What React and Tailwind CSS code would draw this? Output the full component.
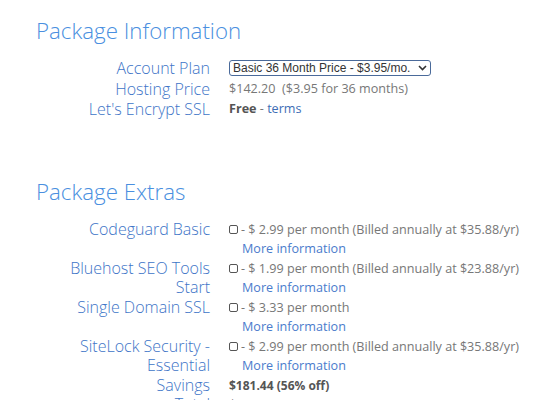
const extras = [
  { name: 'Codeguard Basic', price: '$ 2.99 per month (Billed annually at $35.88/yr)' },
  { name: 'Bluehost SEO Tools Start', price: '$ 1.99 per month (Billed annually at $23.88/yr)' },
  { name: 'Single Domain SSL', price: '$ 3.33 per month' },
  { name: 'SiteLock Security - Essential', price: '$ 2.99 per month (Billed annually at $35.88/yr)' },
];

function Row({ label, tall, children }) {
  const lh = tall ? 'leading-[20.5px]' : 'leading-[19.5px]';
  return (
    <div className="flex">
      <div className={`w-[174px] shrink-0 text-right text-[16px] font-light text-[#3d74c7] pl-[30px] ${lh}`}>
        {label}
      </div>
      <div className={`pl-[19px] text-[12.6px] text-[#777] whitespace-nowrap ${lh}`}>{children}</div>
    </div>
  );
}

export default function App() {
  return (
    <div className="bg-white min-h-[400px] px-[36px] pt-[15px]" style={{ fontFamily: '"Open Sans", sans-serif' }}>
      <h2 className="text-[22.3px] font-light text-[#4a8fe0] leading-[32px]">Package Information</h2>

      <div className="mt-[11px]">
        <Row tall label="Account Plan">
          <div className="relative mt-[2px] w-[202px] h-[16px] border border-[#4a6a9a] rounded-[3px] bg-white flex items-center pl-[3px] text-[12px] leading-[14px] text-[#333] font-['Liberation_Sans',sans-serif]">
            <span>Basic 36 Month Price - $3.95/mo.</span>
            <svg className="absolute right-[3px] top-[4px]" width="9" height="6" viewBox="0 0 9 6" fill="none">
              <path d="M1 1l3.5 3.5L8 1" stroke="#333" strokeWidth="1.6" />
            </svg>
          </div>
        </Row>
        <Row tall label="Hosting Price">$142.20&nbsp; ($3.95 for 36 months)</Row>
        <Row tall label="Let's Encrypt SSL">
          <b className="font-bold text-[#555]">Free</b> - <span className="text-[#3d6db5]">terms</span>
        </Row>
      </div>

      <h2 className="mt-[56px] text-[22.3px] font-light text-[#4a8fe0] leading-[32px]">Package Extras</h2>

      <div className="mt-[12px]">
        {extras.map((e) => (
          <Row key={e.name} label={e.name}>
            <div className="flex items-center">
              <span className="w-[9px] h-[9px] border border-[#555] rounded-[2px] mr-[3px] shrink-0" />
              <span>- {e.price}</span>
            </div>
            <div className="pl-[13px] text-[#4a7bcc]">More information</div>
          </Row>
        ))}
        <Row label="Savings">
          <b className="font-bold text-[#555] text-[12px]">$181.44 (56% off)</b>
        </Row>
        <Row label="Total">$142.20</Row>
      </div>
    </div>
  );
}
